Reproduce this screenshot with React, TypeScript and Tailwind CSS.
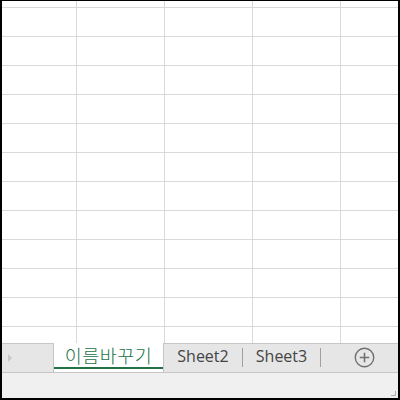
import React from "react";

export default function App() {
  const rows = Array.from({ length: 13 });
  const cols = Array.from({ length: 5 });
  return (
    <div
      className="w-[400px] h-[400px] border-black border-l-2 border-r-2 border-t border-b-2 flex flex-col overflow-hidden bg-white"
      style={{ fontFamily: '"Open Sans", "Noto Sans CJK KR", sans-serif' }}
    >
      <div className="h-[342px] overflow-hidden bg-white">
        <div className="grid grid-cols-[75px_88px_88px_88px_88px] grid-rows-[7px_repeat(12,29px)]">
          {rows.map((_, r) =>
            cols.map((_, c) => (
              <div key={`${r}-${c}`} className="border-r border-b border-[#d9d9d9]" />
            ))
          )}
        </div>
      </div>
      <div className="h-[30px] flex items-stretch bg-[#e6e6e6] border-t border-b border-[#c6c6c6]">
        <div className="w-[52px] flex items-center pl-[6px] border-r border-[#c6c6c6]">
          <div className="w-0 h-0 border-t-[4px] border-b-[4px] border-l-[4px] border-t-transparent border-b-transparent border-l-[#c8c8c8]" />
        </div>
        <div className="w-[110px] bg-white border-r border-[#c6c6c6] relative flex items-center justify-center -mt-px">
          <span className="text-[18.5px] text-[#217346] leading-none pb-[4px] tracking-[0.5px]" style={{ fontFamily: '"Noto Sans CJK KR", sans-serif', fontWeight: 300 }}>이름바꾸기</span>
          <div className="absolute left-0 right-0 bottom-[3px] h-[2px] bg-[#217346]" />
        </div>
        <div className="w-[78px] flex items-center justify-center">
          <span className="text-[16px] text-[#444] leading-none pb-[4px]">Sheet2</span>
        </div>
        <div className="w-px h-[19px] bg-[#a0a0a0] self-center mb-[2px]" />
        <div className="w-[77px] flex items-center justify-center">
          <span className="text-[16px] text-[#444] leading-none pb-[4px]">Sheet3</span>
        </div>
        <div className="w-px h-[19px] bg-[#a0a0a0] self-center mb-[2px]" />
        <div className="flex-1 flex items-center justify-center pb-[2px] pl-[10px]">
          <svg width="21" height="21" viewBox="0 0 20 20">
            <circle cx="10" cy="10" r="8.8" fill="none" stroke="#707070" strokeWidth="1.3" />
            <path d="M10 5.5v9M5.5 10h9" stroke="#707070" strokeWidth="1.5" />
          </svg>
        </div>
      </div>
      <div className="flex-1 bg-[#f0f0f0] relative">
        <div className="absolute right-[2px] bottom-[2px] w-[5px] h-[5px] border-r border-b border-[#b0b0b0]" />
      </div>
    </div>
  );
}
